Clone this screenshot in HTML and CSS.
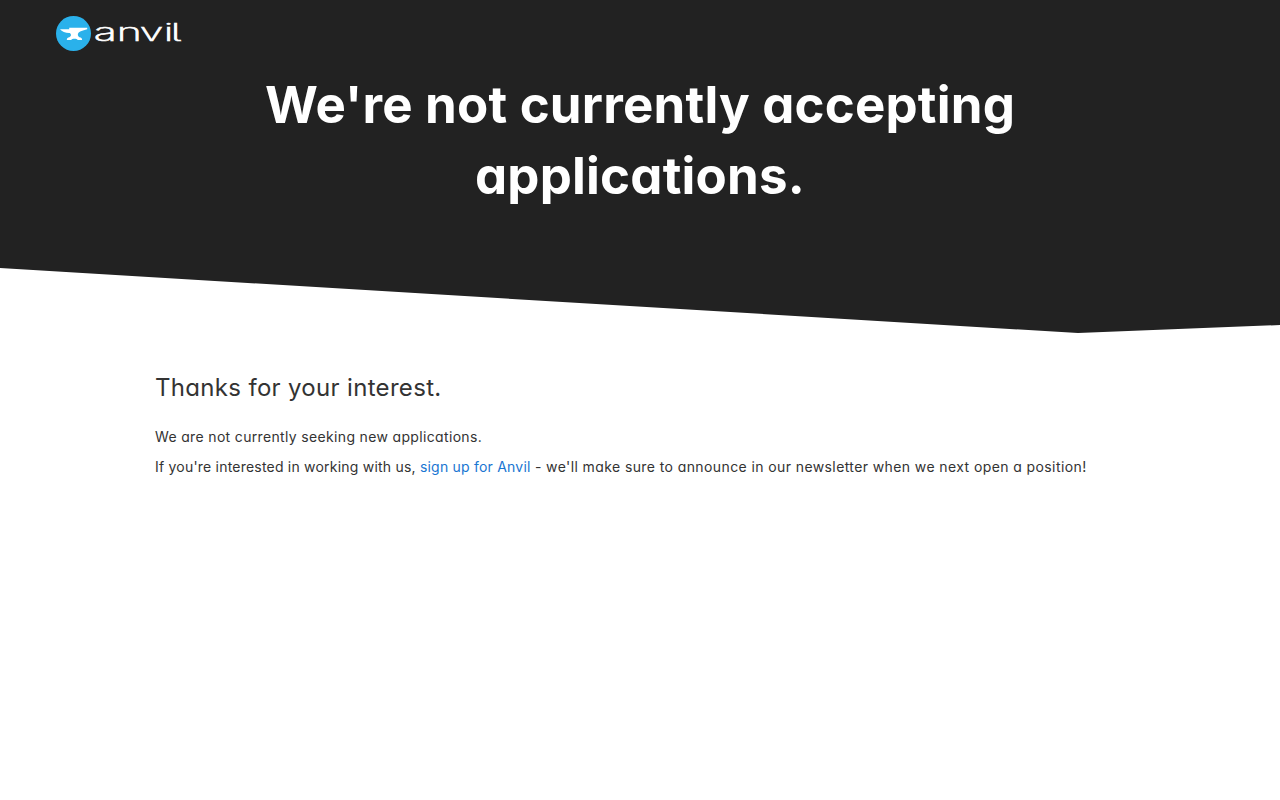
FILE: index.html
```
<!doctype html>
<html lang="en">
  <head>
    <meta charset="UTF-8" />
    <meta name="viewport" content="width=device-width, initial-scale=1.0" />
    <title>Anvil | Jobs</title>
    <link rel="stylesheet" href="styles.css">
  </head>
  <body>
    <header class="hero">
      <nav class="navbar">
        <a class="logo" href="/" aria-label="Anvil">
          <svg width="130" height="36" viewBox="0 0 130 36">
            <circle cx="17.5" cy="17.5" r="17.5" fill="#2ab1eb" />
            <path
              fill="#fff"
              d="M4 13.2H13.2V11.8H31.2V13.2C27.8 14.1 24.2 15.1 22.7 16.5C21.3 18.1 21.6 19.9 23.4 21.2C25.1 21.6 26.1 22.1 26.1 23.9H21.8C20.8 22.4 16.1 22.4 15.1 23.9H10.8C10.8 22.1 11.9 21.6 13.4 21.2C15.4 20.1 15.5 18.5 13.8 17.1C9.8 17.3 5.9 15.6 4 13.2Z"
            />
            <text class="wordmark" transform="scale(1.75 1)" y="25" x="21.6 34.7 47.8 61.6 65.6">anvil</text>
          </svg>
        </a>
      </nav>
      <h1 class="hero-title">
        <span class="line-one">We're not currently accepting</span>
        <span class="line-two">applications.</span>
      </h1>
    </header>

    <main class="content">
      <h2 class="thanks">Thanks for your interest.</h2>
      <p class="seeking">We are not currently seeking new applications.</p>
      <p class="signup">
        <span class="before">If you're interested in working with us, </span><a href="/sign-up">sign up for Anvil</a><span class="dash"> - </span><span class="after">we'll make sure to announce in our newsletter when we next open a position!</span>
      </p>
    </main>
  </body>
</html>
```
FILE: styles.css
```
:root {
  --dark: #222;
  --text: #333;
  --link: #1976d2;
}

body {
  margin: 0;
  background: #fff;
  color: var(--text);
  font-family: "Inter", sans-serif;
  /* single-storey a */
  font-feature-settings: "cv11";
  font-size: 14px;
  line-height: 20px;
}

/* Dark banner with the slanted bottom edge */
.hero {
  box-sizing: border-box;
  height: 333px;
  padding-top: 16px;
  background: var(--dark);
  color: #fff;
  clip-path: polygon(0 0, 100% 0, 100% 325px, 1078px 100%, 0 268px);
}

.navbar {
  display: flex;
  height: 36px;
  padding: 0 56px;
}

.logo svg {
  display: block;
}

.wordmark {
  fill: #fff;
  stroke: #fff;
  stroke-width: 0.9px;
  vector-effect: non-scaling-stroke;
  font-size: 24.5px;
  font-weight: 200;
  /* l with a tail */
  font-feature-settings: "cv05";
}

.hero-title {
  margin: 17px 0 0;
  font-size: 51px;
  font-weight: 700;
  line-height: 71px;
  text-align: center;
}

.hero-title span {
  display: block;
  white-space: nowrap;
}

.line-one {
  letter-spacing: 0.2px;
}

.line-two {
  letter-spacing: 0.2px;
}

.content {
  width: 970px;
  margin: 0 auto;
  padding-top: 38px;
  white-space: nowrap;
}

.thanks {
  margin: 0;
  font-size: 24px;
  font-weight: 400;
  line-height: 34px;
  letter-spacing: 0.32px;
}

.seeking {
  margin: 22px 0 10px;
  letter-spacing: 0.34px;
}

.signup {
  margin: 0;
  letter-spacing: 0.21px;
}

.signup .dash {
  letter-spacing: 0.4px;
}

.signup .after {
  letter-spacing: 0.4px;
}

.content a {
  color: var(--link);
  text-decoration: none;
}
```
